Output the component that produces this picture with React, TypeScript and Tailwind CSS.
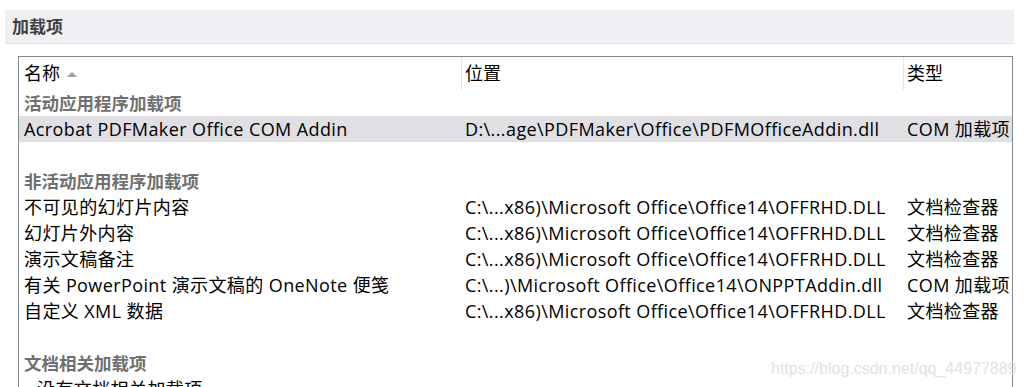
import React from "react";

const F = { fontFamily: '"Open Sans", "Noto Sans CJK SC", sans-serif' };

type Row =
  | { kind: "section"; text: string }
  | { kind: "blank" }
  | { kind: "item"; name: string; loc: string; type: string; selected?: boolean; indent?: boolean };

const rows: Row[] = [
  { kind: "section", text: "活动应用程序加载项" },
  {
    kind: "item",
    name: "Acrobat PDFMaker Office COM Addin",
    loc: "D:\\...age\\PDFMaker\\Office\\PDFMOfficeAddin.dll",
    type: "COM 加载项",
    selected: true,
  },
  { kind: "blank" },
  { kind: "section", text: "非活动应用程序加载项" },
  { kind: "item", name: "不可见的幻灯片内容", loc: "C:\\...x86)\\Microsoft Office\\Office14\\OFFRHD.DLL", type: "文档检查器" },
  { kind: "item", name: "幻灯片外内容", loc: "C:\\...x86)\\Microsoft Office\\Office14\\OFFRHD.DLL", type: "文档检查器" },
  { kind: "item", name: "演示文稿备注", loc: "C:\\...x86)\\Microsoft Office\\Office14\\OFFRHD.DLL", type: "文档检查器" },
  {
    kind: "item",
    name: "有关 PowerPoint 演示文稿的 OneNote 便笺",
    loc: "C:\\...)\\Microsoft Office\\Office14\\ONPPTAddin.dll",
    type: "COM 加载项",
  },
  { kind: "item", name: "自定义 XML 数据", loc: "C:\\...x86)\\Microsoft Office\\Office14\\OFFRHD.DLL", type: "文档检查器" },
  { kind: "blank" },
  { kind: "section", text: "文档相关加载项" },
  { kind: "item", name: "没有文档相关加载项", loc: "", type: "", indent: true },
];

export default function App() {
  return (
    <div className="relative h-[387px] w-[1025px] overflow-hidden bg-white" style={F}>
      <div className="pt-[10px] pl-[5px] w-[1014px]">
        <div className="flex h-[34px] items-center border-b border-[#e2e2e6] bg-[#f0f0f4] pl-[7px]">
          <span className="text-[17px] font-bold text-[#3f3f3f]">加载项</span>
        </div>
      </div>
      <div className="ml-[18px] mt-[12px] w-[995px] border-l border-r border-t border-[#828790] text-[18px] leading-[26px] tracking-[0.4px] text-black">
        <div className="grid h-[33px] grid-cols-[442px_442px_1fr] tracking-normal">
          <div className="flex items-center gap-[7px] pl-[5px] pb-[1px]">
            <span>名称</span>
            <svg width="10" height="6" viewBox="0 0 10 6" className="mt-[1px]">
              <path d="M0 6 L5 1 L10 6 Z" fill="#a0a0a0" />
            </svg>
          </div>
          <div className="flex items-center border-l border-[#e5e5e5] pl-[3px] pb-[1px]">位置</div>
          <div className="flex items-center border-l border-[#e5e5e5] pl-[3px] pb-[1px]">类型</div>
        </div>
        {rows.map((r, i) => {
          if (r.kind === "section")
            return (
              <div key={i} className="flex h-[26px] items-center pl-[5px] text-[17.5px] font-bold tracking-normal text-[#707070]">
                {r.text}
              </div>
            );
          if (r.kind === "blank") return <div key={i} className="h-[26px]" />;
          return (
            <div
              key={i}
              className={`grid h-[26px] grid-cols-[442px_442px_1fr] items-center whitespace-nowrap ${
                r.selected ? "bg-[#dfdfe4]" : ""
              }`}
            >
              <div className={`overflow-hidden ${r.indent ? "pl-[18px]" : "pl-[5px]"}`}>{r.name}</div>
              <div className="overflow-hidden pl-[4px]">{r.loc}</div>
              <div className="overflow-hidden pl-[4px]">{r.type}</div>
            </div>
          );
        })}
      </div>
      <div
        className="absolute left-[771px] top-[357px] text-[16px] text-[#e2e2e2]"
        style={{ fontFamily: '"Liberation Sans", Arial, sans-serif' }}
      >
        https://blog.csdn.net/qq_44977889
      </div>
    </div>
  );
}
